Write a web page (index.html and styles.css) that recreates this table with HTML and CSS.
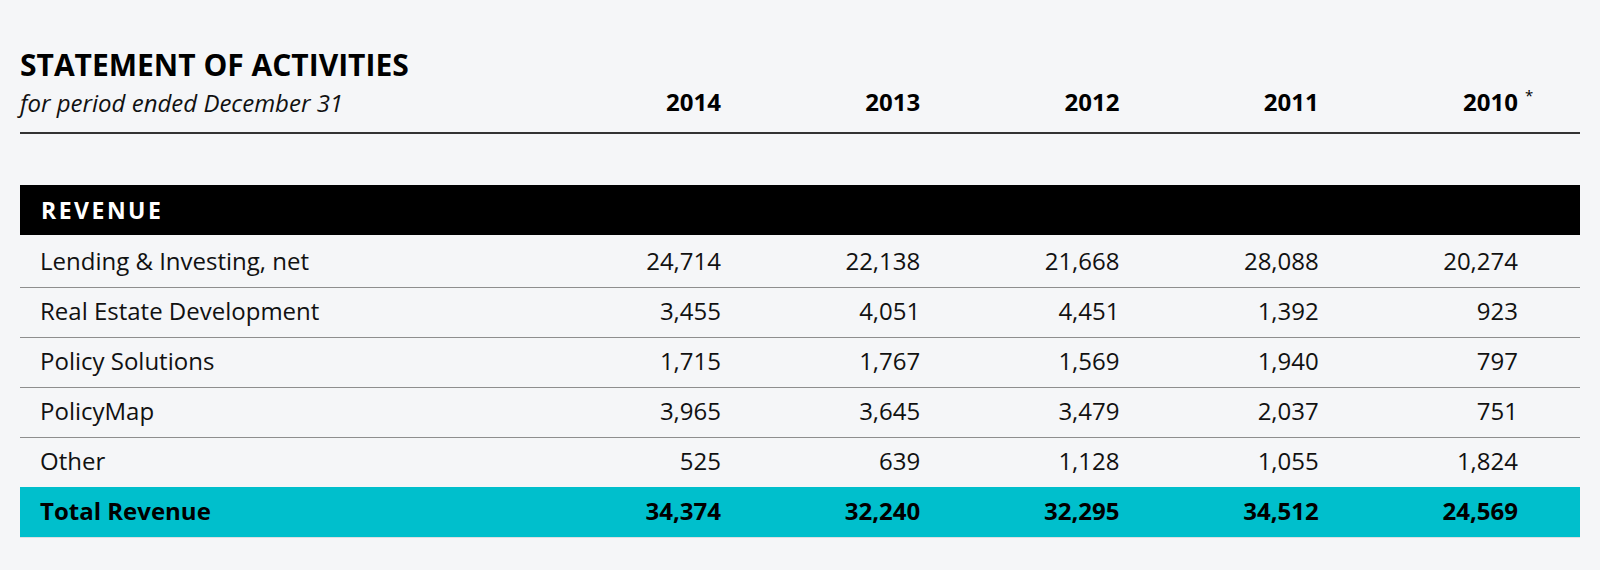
FILE: index.html
```html
<!DOCTYPE html>
<html lang="en">
<head>
<meta charset="utf-8">
<title>Statement of Activities</title>
<link rel="stylesheet" href="styles.css">
</head>
<body>
<div class="statement">
  <div class="head grid">
    <div class="title-block">
      <h1 class="title">STATEMENT OF ACTIVITIES</h1>
      <p class="subtitle">for period ended December 31</p>
    </div>
    <div class="year">2014</div>
    <div class="year">2013</div>
    <div class="year">2012</div>
    <div class="year">2011</div>
    <div class="year"><span class="note">2010<sup class="star">*</sup></span></div>
  </div>

  <div class="section-bar">REVENUE</div>

  <div class="row grid"><div class="label">Lending &amp; Investing, net</div><div class="num">24,714</div><div class="num">22,138</div><div class="num">21,668</div><div class="num">28,088</div><div class="num">20,274</div></div>
  <div class="row grid"><div class="label">Real Estate Development</div><div class="num">3,455</div><div class="num">4,051</div><div class="num">4,451</div><div class="num">1,392</div><div class="num">923</div></div>
  <div class="row grid"><div class="label">Policy Solutions</div><div class="num">1,715</div><div class="num">1,767</div><div class="num">1,569</div><div class="num">1,940</div><div class="num">797</div></div>
  <div class="row grid"><div class="label">PolicyMap</div><div class="num">3,965</div><div class="num">3,645</div><div class="num">3,479</div><div class="num">2,037</div><div class="num">751</div></div>
  <div class="row row-last grid"><div class="label">Other</div><div class="num">525</div><div class="num">639</div><div class="num">1,128</div><div class="num">1,055</div><div class="num">1,824</div></div>
  <div class="total grid"><div class="label">Total Revenue</div><div class="num">34,374</div><div class="num">32,240</div><div class="num">32,295</div><div class="num">34,512</div><div class="num">24,569</div></div>
</div>
</body>
</html>
```

FILE: styles.css
```css
html, body {
  margin: 0;
  padding: 0;
  background: #f5f6f8;
}

body {
  font-family: "Open Sans", "DejaVu Sans", sans-serif;
  color: #111;
}

.statement {
  margin: 0 20px;
  padding-top: 48px;
}

.grid {
  display: grid;
  grid-template-columns: 1fr repeat(5, 199.25px);
  padding-right: 62px;
}

.head {
  align-items: end;
  padding-bottom: 15px;
  border-bottom: 2px solid #333;
}

.title {
  margin: 0 0 7px 0;
  font-size: 30px;
  line-height: 34px;
  font-weight: 700;
  color: #000;
}

.subtitle {
  margin: 0;
  font-size: 24px;
  line-height: 28px;
  font-style: italic;
  color: #111;
}

.year {
  text-align: right;
  font-size: 24px;
  line-height: 28px;
  font-weight: 700;
  color: #000;
  padding-bottom: 1px;
}

.note {
  position: relative;
}

.star {
  position: absolute;
  left: 100%;
  top: 3px;
  margin-left: 7px;
  font-size: 15px;
  line-height: 15px;
  font-weight: 400;
}

.section-bar {
  margin-top: 51px;
  margin-bottom: 3px;
  height: 50px;
  line-height: 50px;
  padding-left: 21px;
  background: #000;
  color: #fff;
  font-size: 23px;
  font-weight: 700;
  letter-spacing: 2.5px;
}

.row {
  font-size: 24px;
  line-height: 46px;
  padding-bottom: 3px;
  border-bottom: 1px solid #8e8e8e;
}

.row-last {
  border-bottom: none;
}

.label {
  padding-left: 20px;
}

.num {
  text-align: right;
}

.total {
  font-size: 24px;
  line-height: 48px;
  padding-bottom: 2px;
  font-weight: 700;
  background: #00bfcc;
  color: #000;
  border-bottom: 1px solid #dcdfe2;
}
```
